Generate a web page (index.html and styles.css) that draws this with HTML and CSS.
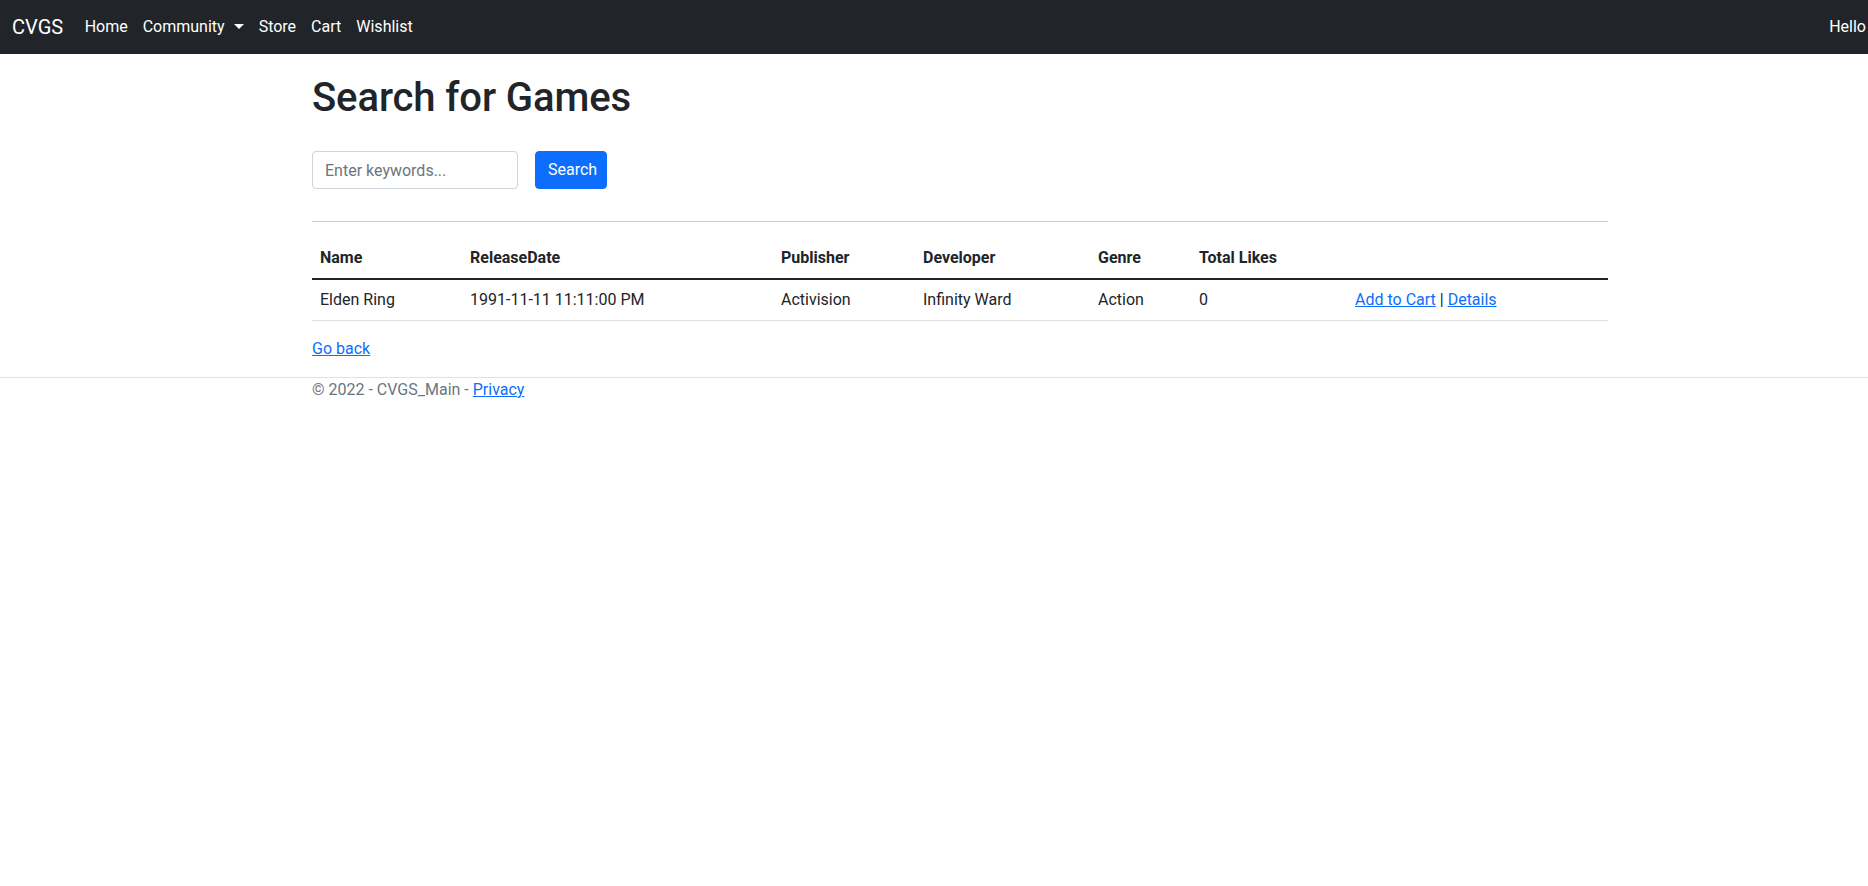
FILE: index.html
```html
<!DOCTYPE html>
<html lang="en">
<head>
<meta charset="utf-8">
<title>Search for Games - CVGS_Main</title>
<link rel="stylesheet" href="styles.css">
</head>
<body>
<header>
  <nav class="navbar">
    <a class="brand" href="#">CVGS</a>
    <ul class="nav">
      <li><a class="nav-link" href="#">Home</a></li>
      <li><a class="nav-link dropdown-toggle" href="#">Community</a></li>
      <li><a class="nav-link" href="#">Store</a></li>
      <li><a class="nav-link" href="#">Cart</a></li>
      <li><a class="nav-link" href="#">Wishlist</a></li>
    </ul>
    <span class="hello">Hello</span>
  </nav>
</header>
<div class="container">
  <main class="main">
    <h1 class="title">Search for Games</h1>
    <form class="search-form">
      <input class="form-control" type="text" placeholder="Enter keywords...">
      <button class="btn-primary" type="button">Search</button>
    </form>
    <hr class="divider">
    <table class="table">
      <colgroup>
        <col class="c-name"><col class="c-date"><col class="c-pub"><col class="c-dev"><col class="c-genre"><col class="c-likes"><col class="c-actions">
      </colgroup>
      <thead>
        <tr>
          <th>Name</th>
          <th>ReleaseDate</th>
          <th>Publisher</th>
          <th>Developer</th>
          <th>Genre</th>
          <th>Total Likes</th>
          <th></th>
        </tr>
      </thead>
      <tbody>
        <tr>
          <td>Elden Ring</td>
          <td>1991-11-11 11:11:00 PM</td>
          <td>Activision</td>
          <td>Infinity Ward</td>
          <td>Action</td>
          <td>0</td>
          <td><a href="#">Add to Cart</a> | <a href="#">Details</a></td>
        </tr>
      </tbody>
    </table>
    <a class="back" href="#">Go back</a>
  </main>
</div>
<footer class="footer">
  <div class="container">&copy; 2022 - CVGS_Main - <a href="#">Privacy</a></div>
</footer>
</body>
</html>
```
FILE: styles.css
```css
* { box-sizing: border-box; }
html, body { margin: 0; padding: 0; }
body {
  font-family: Roboto, "Open Sans", "Liberation Sans", sans-serif;
  font-size: 16px;
  line-height: 1.5;
  color: #212529;
  background: #fff;
  overflow-x: hidden;
}
a { color: #0d6efd; text-decoration: underline; }

.navbar {
  display: flex;
  align-items: center;
  height: 54px;
  background: #212529;
  padding: 0 2px 0 12px;
  margin-bottom: 20px;
  white-space: nowrap;
}
.brand {
  color: #fff;
  font-size: 20px;
  line-height: 30px;
  text-decoration: none;
  margin-right: 14px;
}
.nav {
  display: flex;
  list-style: none;
  margin: 0;
  padding: 0;
}
.nav-link {
  display: block;
  color: #fff;
  text-decoration: none;
  padding: 8px 7.5px;
  line-height: 24px;
}
.dropdown-toggle::after {
  content: "";
  display: inline-block;
  margin-left: 9px;
  vertical-align: 3px;
  border-top: 5px solid #fff;
  border-left: 5px solid transparent;
  border-right: 5px solid transparent;
}
.hello {
  margin-left: auto;
  color: #fff;
}

.container {
  width: 1320px;
  margin-left: 300px;
  padding: 0 12px;
}
.main { padding-bottom: 16px; }
.title {
  font-size: 40px;
  font-weight: 500;
  line-height: 48px;
  margin: 0 0 29px;
  letter-spacing: -0.1px;
}
.search-form {
  display: flex;
  gap: 17px;
  margin: 0;
}
.form-control {
  width: 206px;
  height: 38px;
  padding: 6px 12px;
  font: inherit;
  color: #212529;
  border: 1px solid #ced4da;
  border-radius: 4px;
}
.form-control::placeholder { color: #6c757d; }
.btn-primary {
  width: 72px;
  height: 38px;
  font: inherit;
  color: #fff;
  background: #0d6efd;
  border: 1px solid #0d6efd;
  border-radius: 4px;
  padding: 6px 12px;
}
.divider {
  border: 0;
  border-top: 1px solid #c8c9ca;
  margin: 32px 0 16px;
}
.table {
  width: 100%;
  border-collapse: collapse;
  table-layout: fixed;
  margin-bottom: 16px;
}
.c-name { width: 150px; }
.c-date { width: 311px; }
.c-pub { width: 142px; }
.c-dev { width: 175px; }
.c-genre { width: 101px; }
.c-likes { width: 156px; }
.c-actions { width: 261px; }
.table th, .table td {
  padding: 8px;
  text-align: left;
  line-height: 24px;
  white-space: nowrap;
}
.table th {
  font-weight: 700;
  border-bottom: 2px solid #212529;
}
.table td { border-bottom: 1px solid #dee2e6; }
.back { display: inline-block; }

.footer {
  border-top: 1px solid #dee2e6;
  color: #6c757d;
  line-height: 24px;
}
```
